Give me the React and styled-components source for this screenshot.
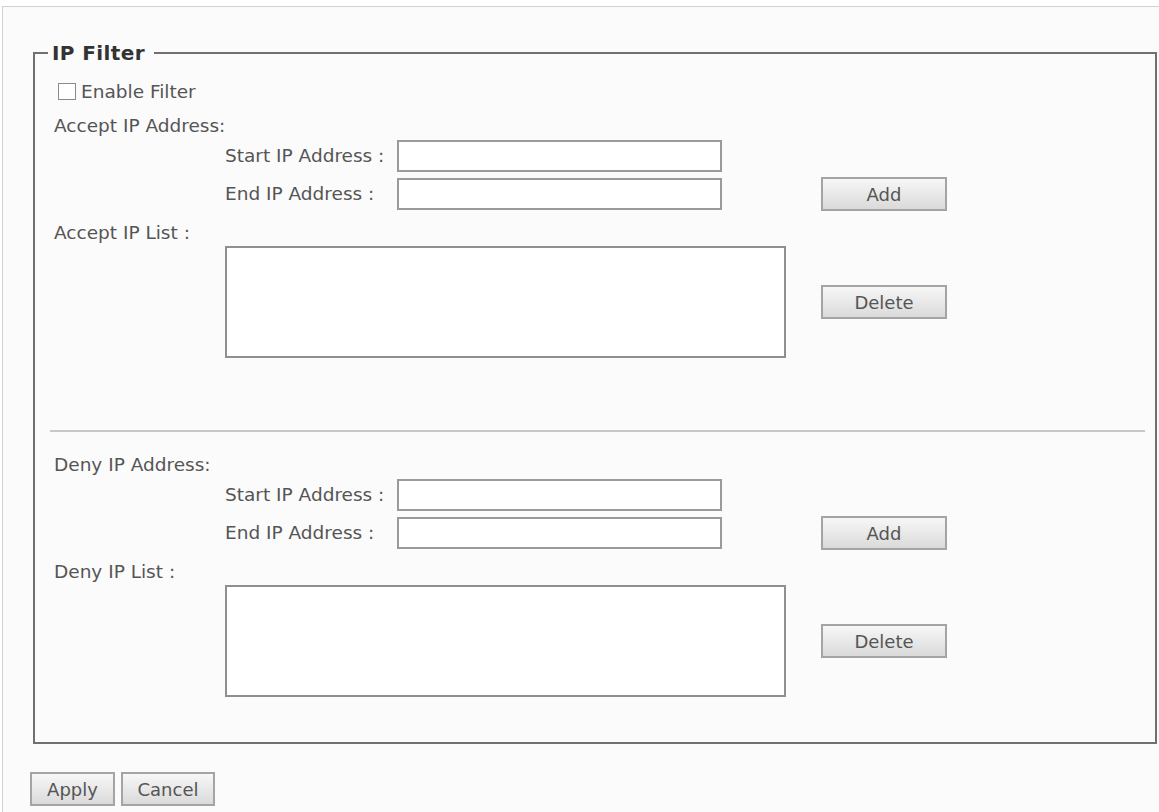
import React from 'react';
import styled, { createGlobalStyle } from 'styled-components';

const GlobalStyle = createGlobalStyle`
    html, body {
        margin: 0;
        padding: 0;
        background: #ffffff;
    }
    body {
        font-family: "DejaVu Sans", Verdana, sans-serif;
        color: #555555;
    }
`;

const Page = styled.div`
    width: 1159px;
    height: 812px;
    box-sizing: border-box;
    padding: 6px 0 0 2px;
    background: #ffffff;
`;

const Panel = styled.div`
    height: 100%;
    box-sizing: border-box;
    border-top: 1px solid #d2d2d2;
    border-left: 1px solid #d2d2d2;
    background: #fbfbfb;
    padding: 34px 0 0 30px;
`;

const FieldSet = styled.fieldset`
    margin: 0;
    width: 1124px;
    box-sizing: border-box;
    border: 2px solid #707070;
    padding: 0 0 45px 19px;
`;

const Legend = styled.legend`
    margin-left: -6px;
    padding: 0 9px 0 4px;
    font-family: "DejaVu Sans", Verdana, sans-serif;
    font-weight: bold;
    font-size: 20px;
    letter-spacing: 0.4px;
    line-height: 24px;
    color: #333333;
`;

const Text = `
    font-size: 18.5px;
    line-height: 22px;
    color: #555555;
    white-space: nowrap;
`;

const CheckRow = styled.label`
    display: flex;
    align-items: center;
    gap: 5px;
    margin: 18px 0 0 4px;
    height: 17px;
    ${Text}
`;

const CheckBox = styled.span`
    width: 18px;
    height: 17px;
    box-sizing: border-box;
    border: 1px solid #8a8a8a;
    background: #ffffff;
`;

const Section = styled.div`
    display: grid;
    grid-template-columns: 171px 172px 325px 64px 35px 126px;
    grid-template-rows: 25px 38px 32px 36px 112px;
    margin-top: ${(props) => props.top}px;
`;

const Caption = styled.div`
    grid-column: 1 / -1;
    grid-row: ${(props) => props.row};
    margin-top: ${(props) => props.offset || 0}px;
    ${Text}
`;

const FieldLabel = styled.div`
    grid-column: 2;
    grid-row: ${(props) => props.row};
    align-self: start;
    height: 32px;
    display: flex;
    align-items: center;
    ${Text}
`;

const TextInput = styled.div`
    grid-column: 3;
    grid-row: ${(props) => props.row};
    align-self: start;
    height: 32px;
    box-sizing: border-box;
    border: 2px solid #9a9a9a;
    background: #ffffff;
`;

const ListBox = styled.div`
    grid-column: 2 / 5;
    grid-row: 5;
    box-sizing: border-box;
    border: 2px solid #8f8f8f;
    background: #ffffff;
`;

const Button = styled.div`
    grid-column: 6;
    grid-row: ${(props) => props.row || 'auto'};
    align-self: center;
    display: flex;
    align-items: center;
    justify-content: center;
    width: ${(props) => props.w}px;
    height: 34px;
    box-sizing: border-box;
    border: 2px solid #a4a4a4;
    background: linear-gradient(#f7f7f7, #dadada);
    font-size: 18px;
    color: #555555;
`;

const Divider = styled.div`
    margin: 72px 10px 0 -4px;
    height: 2px;
    background: #c8c8c8;
`;

const Footer = styled.div`
    display: flex;
    gap: 6px;
    margin: 28px 0 0 -3px;
`;

function IpSection({ title, listTitle, top }) {
    return (
        <Section top={top}>
            <Caption row={1}>{title}</Caption>
            <FieldLabel row={2}>Start IP Address :</FieldLabel>
            <TextInput row={2} />
            <FieldLabel row={3}>End IP Address :</FieldLabel>
            <TextInput row={3} />
            <Button row={3} w={126}>Add</Button>
            <Caption row={4} offset={12}>{listTitle}</Caption>
            <ListBox />
            <Button row={5} w={126}>Delete</Button>
        </Section>
    );
}

export default function App() {
    return (
        <Page>
            <GlobalStyle />
            <Panel>
                <FieldSet>
                    <Legend>IP Filter</Legend>
                    <CheckRow>
                        <CheckBox />
                        Enable Filter
                    </CheckRow>
                    <IpSection title="Accept IP Address:" listTitle="Accept IP List :" top={15} />
                    <Divider />
                    <IpSection title="Deny IP Address:" listTitle="Deny IP List :" top={22} />
                </FieldSet>
                <Footer>
                    <Button w={85}>Apply</Button>
                    <Button w={94}>Cancel</Button>
                </Footer>
            </Panel>
        </Page>
    );
}
